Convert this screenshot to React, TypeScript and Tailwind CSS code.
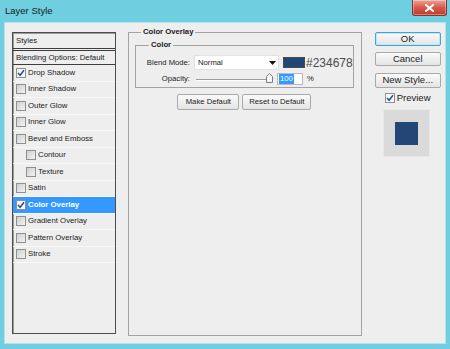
import React from 'react';

function Check({ checked, className }: { checked?: boolean; className?: string }) {
  return (
    <span
      className={`flex h-[10px] w-[10px] shrink-0 items-center justify-center border border-[#8e8f8f] ${
        checked ? 'bg-[#f7f7f7]' : 'bg-gradient-to-br from-[#cfcfcf] to-[#f3f3f3]'
      } ${className ?? ''}`}
    >
      {checked && (
        <svg width="8" height="8" viewBox="0 0 8 8">
          <path d="M1 4 L3.1 6.3 L7 1.2" stroke="#24508f" strokeWidth="1.5" fill="none" />
        </svg>
      )}
    </span>
  );
}

const rows: { label: string; checked?: boolean; indent?: boolean; selected?: boolean }[] = [
  { label: 'Drop Shadow', checked: true },
  { label: 'Inner Shadow' },
  { label: 'Outer Glow' },
  { label: 'Inner Glow' },
  { label: 'Bevel and Emboss' },
  { label: 'Contour', indent: true },
  { label: 'Texture', indent: true },
  { label: 'Satin' },
  { label: 'Color Overlay', checked: true, selected: true },
  { label: 'Gradient Overlay' },
  { label: 'Pattern Overlay' },
  { label: 'Stroke' },
];

function WinButton({ children, wide, primary }: { children: React.ReactNode; wide: string; primary?: boolean }) {
  return (
    <div
      className={`flex items-center justify-center rounded-[2px] border bg-gradient-to-b from-[#fafafa] to-[#e4e4e4] ${wide} ${
        primary ? 'border-[#3fa6d6] shadow-[inset_0_0_0_1px_#bfe6f5]' : 'border-[#a9a9a9]'
      }`}
    >
      {children}
    </div>
  );
}

export default function App() {
  return (
    <div className="flex h-[349px] w-[450px] flex-col bg-[#6fcfe1] font-['Liberation_Sans',Arial,sans-serif] text-[#1a1a1a]">
      {/* Title bar */}
      <div className="flex h-[22px] items-start justify-between">
        <div className="ml-[5px] self-center pt-[1px] text-[9.5px] text-[#1b1b1b]">Layer Style</div>
        <div className="mr-[3px] flex h-[16px] w-[35px] items-center justify-center rounded-b-[3px] border border-t-0 border-[#8a3328] bg-gradient-to-b from-[#e9a496] via-[#d5584a] to-[#c23a2a] shadow-[inset_0_0_0_1px_rgba(255,255,255,0.35)]">
          <svg width="9" height="8" viewBox="0 0 9 8">
            <path d="M1 1 L8 7 M8 1 L1 7" stroke="#ffffff" strokeWidth="2" strokeLinecap="square" />
          </svg>
        </div>
      </div>

      {/* Client area */}
      <div className="mx-[4px] flex h-[322px] border border-[#b6e2ea] bg-[#eeeeee] pl-[7px] pt-[9px]">
        {/* Styles list */}
        <div className="flex h-[302px] w-[104px] shrink-0 flex-col border border-[#4d4d4d] bg-[#eeeeee] text-[7.8px] shadow-[inset_1px_1px_0_#9a9a9a]">
          <div className="flex h-[18px] shrink-0 items-center border-b-[3px] border-double border-[#3d3d3d] pl-[3px]">Styles</div>
          <div className="flex h-[14px] shrink-0 items-center border-b border-[#3d3d3d] pl-[3px]">Blending Options: Default</div>
          {rows.map((r) => (
            <div
              key={r.label}
              className={`flex h-[16.5px] shrink-0 items-center gap-[2px] border-b border-[#f8f8f8] ${
                r.indent ? 'pl-[13px]' : 'pl-[3px]'
              } ${r.selected ? 'bg-[#3399ff] font-bold text-white' : ''}`}
            >
              <Check checked={r.checked} />
              <span>{r.label}</span>
            </div>
          ))}
        </div>

        {/* Color Overlay group */}
        <fieldset className="ml-[12px] mt-[-5px] h-[309px] w-[232px] shrink-0 border border-[#a3a3a3] pl-[6px] pr-[7px]">
          <legend className="ml-[6px] px-[2px] text-[7.7px] font-bold leading-[10px]">Color Overlay</legend>
          <fieldset className="mt-[3px] border border-[#a3a3a3] pb-[2px]">
            <legend className="ml-[13px] px-[2px] text-[7.7px] font-bold leading-[10px]">Color</legend>
            <div className="mt-[5px] flex h-[15px] items-center text-[7.7px]">
              <div className="w-[54px] text-right">Blend Mode:</div>
              <div className="ml-[4px] flex h-[15px] w-[85px] items-center justify-between border border-[#e2e2e2] bg-white pl-[3px] pr-[2px]">
                <span>Normal</span>
                <svg width="7" height="4" viewBox="0 0 7 4">
                  <path d="M0 0 L7 0 L3.5 4 Z" fill="#111" />
                </svg>
              </div>
              <div className="ml-[4px] h-[11px] w-[22px] border border-[#4a4a4a] bg-[#234678]" />
              <div className="ml-[1px] text-[12px] leading-[12px] text-[#4a4a4a]">#234678</div>
            </div>
            <div className="mt-[2px] flex h-[13px] items-center text-[7.7px]">
              <div className="w-[54px] text-right">Opacity:</div>
              <div className="relative ml-[6px] h-[12px] w-[77px]">
                <div className="absolute left-0 right-[2px] top-[6px] h-[2px] border-t border-[#9c9c9c] bg-white" />
                <svg className="absolute right-0 top-0" width="7" height="10" viewBox="0 0 7 10">
                  <path d="M0.5 9.5 L0.5 3.5 L3.5 0.5 L6.5 3.5 L6.5 9.5 Z" fill="#f4f4f4" stroke="#7d7d7d" strokeWidth="1" />
                </svg>
              </div>
              <div className="ml-[4px] flex h-[12px] w-[26px] items-center border border-[#b9b9b9] bg-white pl-[1px]">
                <span className="bg-[#3399ff] px-[1px] leading-[10px] text-white">100</span>
              </div>
              <div className="ml-[4px]">%</div>
            </div>
          </fieldset>
          <div className="mt-[6px] flex justify-center gap-[3px] text-[7.7px]">
            <WinButton wide="h-[16px] w-[62px]">Make Default</WinButton>
            <WinButton wide="h-[16px] w-[69px]">Reset to Default</WinButton>
          </div>
        </fieldset>

        {/* Right column */}
        <div className="ml-[13px] flex w-[66px] shrink-0 flex-col text-[9.5px]">
          <WinButton wide="h-[14px] w-[66px]" primary>
            OK
          </WinButton>
          <div className="mt-[6px]">
            <WinButton wide="h-[14px] w-[66px]">Cancel</WinButton>
          </div>
          <div className="mt-[7px]">
            <WinButton wide="h-[15px] w-[66px]">New Style...</WinButton>
          </div>
          <div className="ml-[10px] mt-[5px] flex h-[10px] items-center gap-[2px]">
            <Check checked />
            <span>Preview</span>
          </div>
          <div className="ml-[8px] mt-[6px] flex h-[48px] w-[47px] items-center justify-center border border-[#e8e8e8] bg-[#dadada]">
            <div className="h-[23px] w-[23px] bg-[#234678]" />
          </div>
        </div>
      </div>
      <div className="flex-1" />
    </div>
  );
}
